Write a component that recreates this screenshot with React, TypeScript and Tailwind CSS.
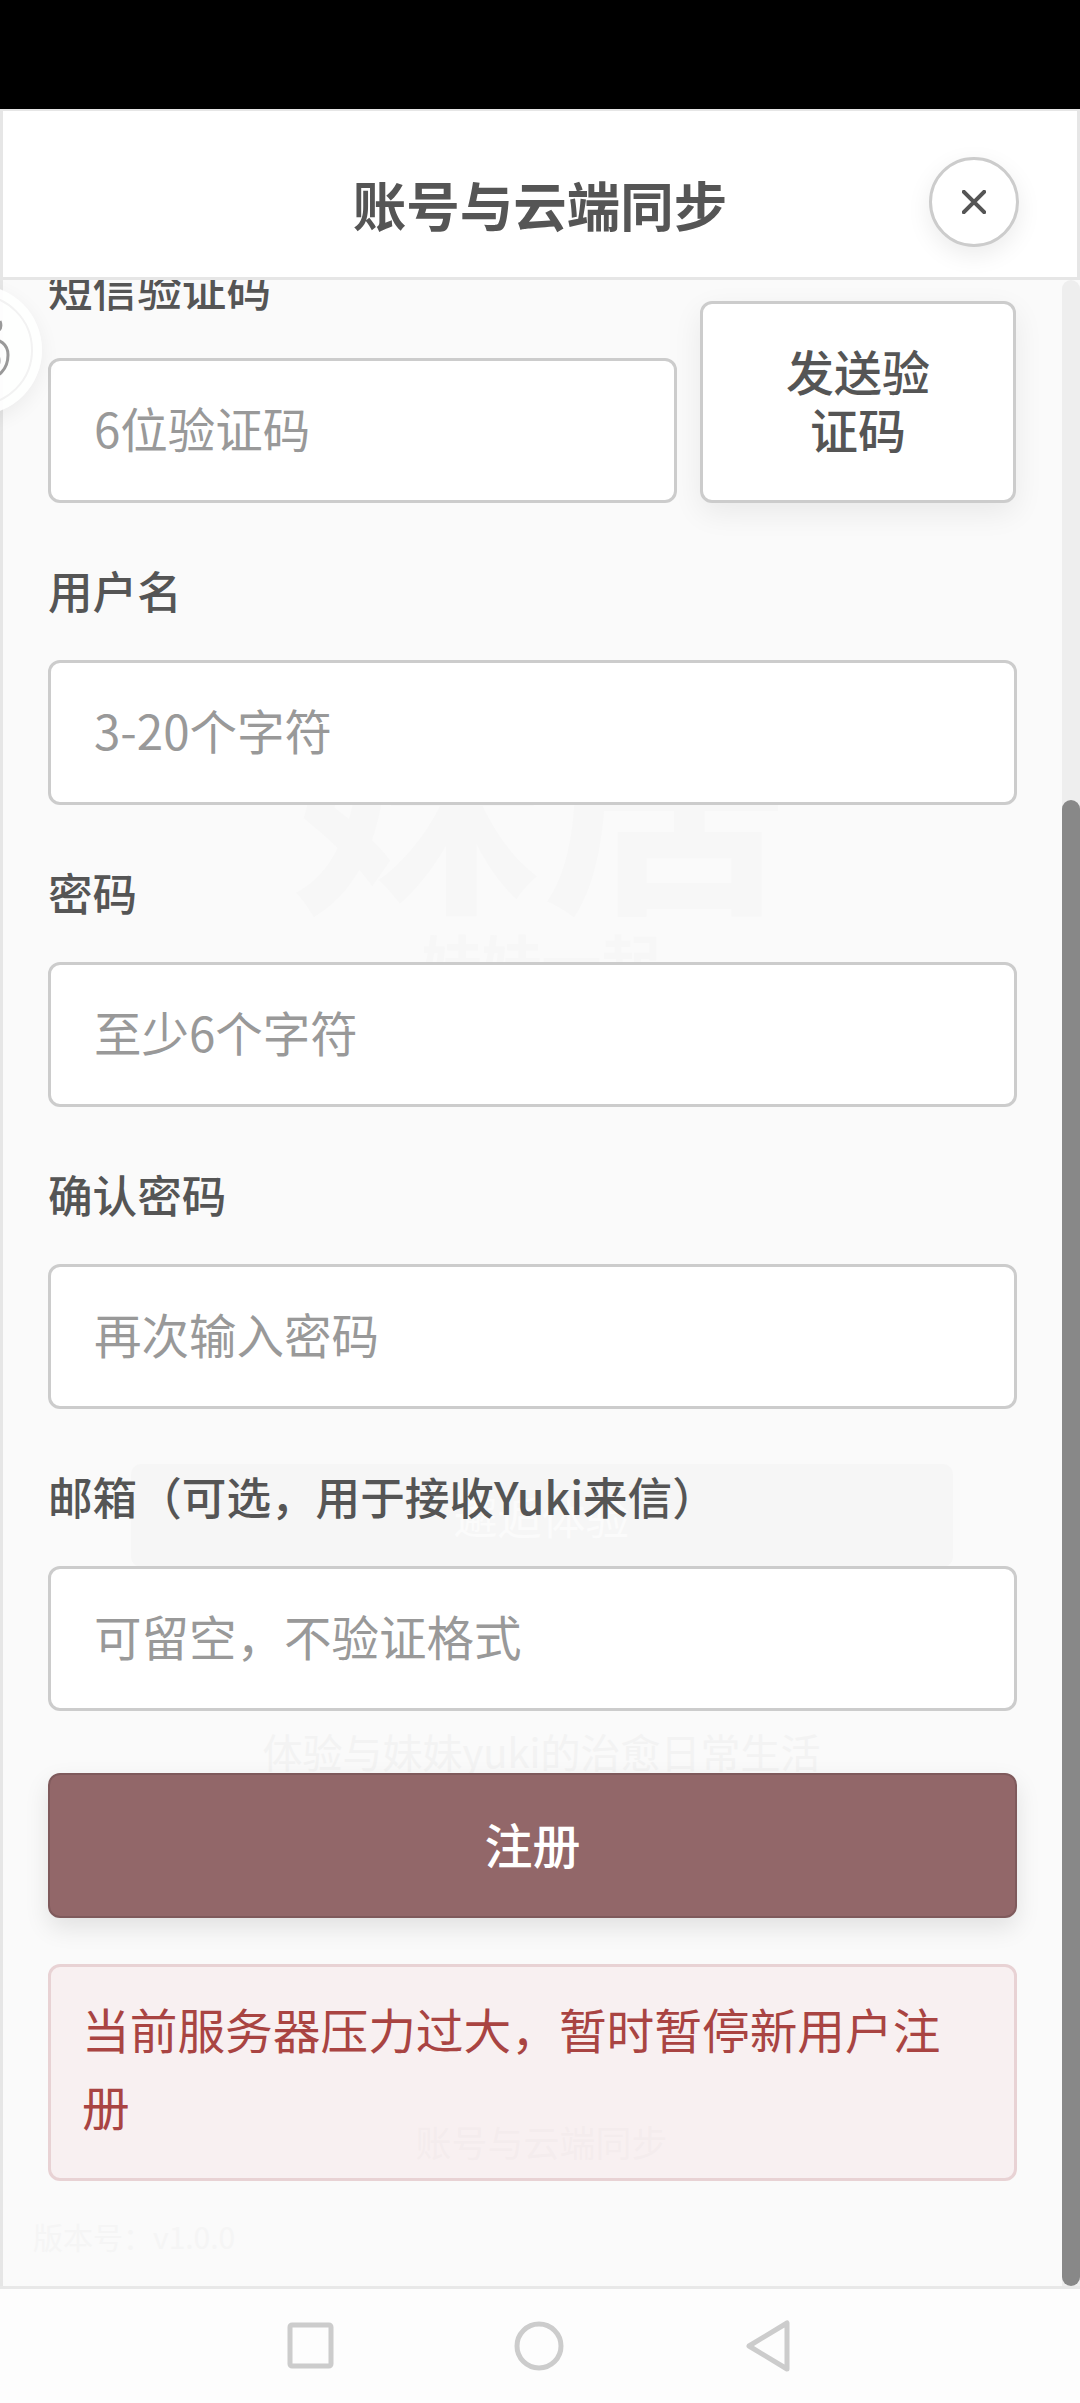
const font = { fontFamily: '"Noto Sans CJK SC", "Noto Sans", sans-serif' };
const inputCls =
  "block h-[145px] w-full rounded-[12px] border-[3px] border-[#cccccc] bg-white px-[43px] pb-[6px] text-[47.5px] text-[#555555] outline-none placeholder:text-[#999999]";
const labelCls = "mb-[34px] h-[66px] text-[44.6px] leading-[60px] font-medium text-[#555555]";

function Field({ label, placeholder }: { label: string; placeholder: string }) {
  return (
    <div className="mb-[57px]">
      <div className={labelCls}>{label}</div>
      <input readOnly placeholder={placeholder} className={inputCls} />
    </div>
  );
}

export default function App() {
  return (
    <div style={font} className="relative flex h-[2403px] w-[1080px] flex-col overflow-hidden bg-[#fdfdfd]">
      <div className="h-[109px] shrink-0 bg-black" />

      <div className="grid h-[171px] shrink-0 grid-cols-[1fr_auto_1fr] items-center border-x-[3px] border-b-[3px] border-t-[2px] border-[#e6e6e6] bg-white pt-[16px]">
        <div />
        <h1 className="mt-[4px] text-[53.5px] leading-none font-semibold text-[#555555]">账号与云端同步</h1>
        <button className="mr-[58px] flex h-[90px] w-[90px] items-center justify-center justify-self-end rounded-full border-[3px] border-[#cccccc] bg-white text-[#555555] shadow-[0_8px_24px_rgba(0,0,0,0.08)]">
          <svg width="24" height="24" viewBox="0 0 26 26" fill="none" stroke="currentColor" strokeWidth="4.5" strokeLinecap="round">
            <path d="M2 2 L24 24 M24 2 L2 24" />
          </svg>
        </button>
      </div>

      <div className="relative min-h-0 flex-1 overflow-hidden border-l-[3px] border-[#e6e6e6] bg-[#fafafa]">
        <div className="pointer-events-none absolute inset-0 flex flex-col items-center text-[#f7f7f7]">
          <div className="mt-[365px] h-[280px] text-[250px] leading-[280px] font-bold">妹居</div>
          <div className="mt-[5px] text-[60px] leading-none font-bold">妹妹一起</div>
          <div className="mt-[474px] flex h-[103px] w-[822px] items-center justify-center rounded-[10px] bg-[#f6f6f6] text-[44px] text-[#fbfbfb]">
            邂逅体验
          </div>
          <div className="mt-[164px] text-[40px] leading-none text-[#f3f3f3]">体验与妹妹yuki的治愈日常生活</div>
          <div className="mt-[352px] text-[36px] leading-none text-[#e4e4e4]">账号与云端同步</div>
          <div className="mt-[62px] ml-[30px] self-start text-[30px] leading-none text-[#f5f5f5]">版本号：v1.0.0</div>
        </div>

        <div className="relative mt-[-22px] pr-[63px] pl-[45px]">
          <div className="mb-[57px] flex items-end gap-[23px]">
            <div className="w-[629px]">
              <div className={labelCls}>短信验证码</div>
              <input readOnly placeholder="6位验证码" className={inputCls} />
            </div>
            <button className="h-[202px] w-[316px] rounded-[12px] border-[3px] border-[#cccccc] bg-white px-[60px] pb-[6px] text-[48px] leading-[58px] font-medium text-[#555555] shadow-[0_10px_30px_rgba(0,0,0,0.07)]">
              发送验证码
            </button>
          </div>

          <Field label="用户名" placeholder="3-20个字符" />
          <Field label="密码" placeholder="至少6个字符" />
          <Field label="确认密码" placeholder="再次输入密码" />
          <Field label="邮箱（可选，用于接收Yuki来信）" placeholder="可留空，不验证格式" />

          <button className="mt-[62px] block h-[145px] w-full rounded-[12px] border-[2px] border-[#7f5a5c] bg-[#926769] pb-[6px] text-[48px] font-medium text-white shadow-[0_10px_24px_rgba(0,0,0,0.1)]">
            注册
          </button>

          <div className="mt-[46px] h-[217px] rounded-[12px] border-[3px] border-[#e8d2d4] bg-[#f8eeef]/80 px-[31px] pt-[23px] text-[47.7px] leading-[77px] text-[#a94442]">
            当前服务器压力过大，暂时暂停新用户注册
          </div>
        </div>

        <div className="absolute top-0 right-0 bottom-0 w-[18px] rounded-t-[9px] bg-[#eeeeee]">
          <div className="absolute top-[520px] bottom-0 w-full rounded-[9px] bg-[#888888]" />
        </div>
      </div>

      <div className="absolute top-[285px] left-[-88px] flex h-[130px] w-[130px] items-center justify-center rounded-full bg-white/90 shadow-[0_6px_20px_rgba(0,0,0,0.06)]">
        <div className="flex h-[112px] w-[112px] items-center justify-end rounded-full border-[2px] border-[#f2f2f2] pr-[21px]">
          <svg width="22" height="62" viewBox="0 0 22 62" fill="none" stroke="#999999" strokeWidth="3">
            <path d="M2 14 C10 14 15 10 12 2 M0 22 C12 18 20 26 20 36 C20 50 10 60 0 58 M0 30 C8 30 11 36 11 42 C11 48 6 52 0 50" />
          </svg>
        </div>
      </div>

      <div className="flex h-[117px] shrink-0 items-center justify-center border-t-[3px] border-[#e8e8e8] bg-[#fdfdfd]">
        <svg className="ml-[4px]" width="510" height="54" viewBox="0 0 510 54" fill="none" stroke="#cccccc" strokeWidth="5" strokeLinejoin="round">
          <rect x="3" y="6" width="41" height="41" rx="2" />
          <circle cx="252" cy="27" r="22" />
          <path d="M500 4 L500 50 L462 27 Z" />
        </svg>
      </div>
    </div>
  );
}
